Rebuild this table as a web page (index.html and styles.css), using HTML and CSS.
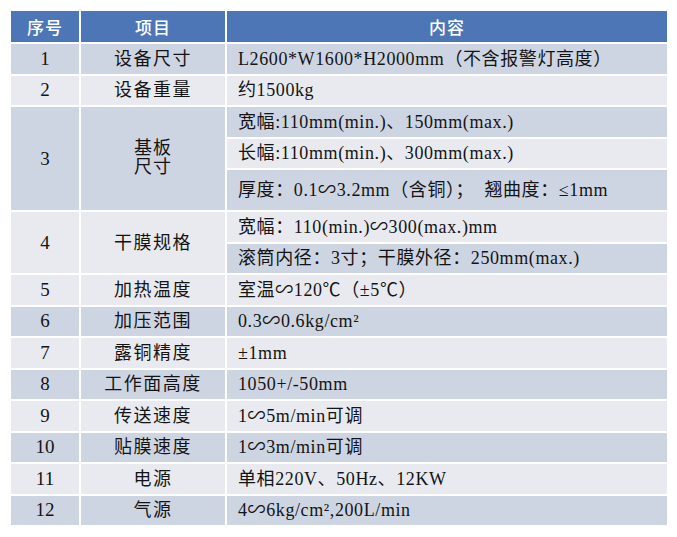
FILE: index.html
```html
<!DOCTYPE html>
<html lang="zh-CN">
<head>
<meta charset="utf-8">
<title>设备参数</title>
<link rel="stylesheet" href="styles.css">
</head>
<body>
<table class="spec">
  <colgroup>
    <col class="c-no">
    <col class="c-item">
    <col class="c-val">
  </colgroup>
  <thead>
    <tr class="head"><th>序号</th><th>项目</th><th>内容</th></tr>
  </thead>
  <tbody>
    <tr class="dark"><td class="no">1</td><td class="item">设备尺寸</td><td class="val">L2600*W1600*H2000mm（不含报警灯高度）</td></tr>
    <tr class="light"><td class="no">2</td><td class="item">设备重量</td><td class="val">约1500kg</td></tr>
    <tr class="dark"><td class="no" rowspan="3">3</td><td class="item two" rowspan="3">基板<br>尺寸</td><td class="val">宽幅:110mm(min.)、150mm(max.)</td></tr>
    <tr class="light"><td class="val">长幅:110mm(min.)、300mm(max.)</td></tr>
    <tr class="dark tall"><td class="val">厚度：0.1∽3.2mm（含铜）；&nbsp; 翘曲度：≤1mm</td></tr>
    <tr class="light"><td class="no" rowspan="2">4</td><td class="item" rowspan="2">干膜规格</td><td class="val">宽幅：110(min.)∽300(max.)mm</td></tr>
    <tr class="dark"><td class="val">滚筒内径：3寸；干膜外径：250mm(max.)</td></tr>
    <tr class="light"><td class="no">5</td><td class="item">加热温度</td><td class="val">室温∽120℃（±5℃）</td></tr>
    <tr class="dark"><td class="no">6</td><td class="item">加压范围</td><td class="val">0.3∽0.6kg/cm²</td></tr>
    <tr class="light"><td class="no">7</td><td class="item">露铜精度</td><td class="val">±1mm</td></tr>
    <tr class="dark"><td class="no">8</td><td class="item">工作面高度</td><td class="val">1050+/-50mm</td></tr>
    <tr class="light"><td class="no">9</td><td class="item">传送速度</td><td class="val">1∽5m/min可调</td></tr>
    <tr class="dark"><td class="no">10</td><td class="item">贴膜速度</td><td class="val">1∽3m/min可调</td></tr>
    <tr class="light"><td class="no">11</td><td class="item">电源</td><td class="val">单相220V、50Hz、12KW</td></tr>
    <tr class="dark"><td class="no">12</td><td class="item">气源</td><td class="val">4∽6kg/cm²,200L/min</td></tr>
  </tbody>
</table>
</body>
</html>
```
FILE: styles.css
```css
html, body {
  margin: 0;
  padding: 0;
  background: #ffffff;
}

.spec {
  margin: 9px 0 0 9px;
  border-collapse: separate;
  border-spacing: 2px;
  table-layout: fixed;
  width: 660px;
  font-family: "Liberation Serif", "Noto Sans CJK SC", serif;
  font-size: 18px;
  color: #141414;
}

.c-no { width: 68px; }
.c-item { width: 144px; }
.c-val { width: 440px; }

.spec th,
.spec td {
  padding: 0;
  vertical-align: middle;
  white-space: nowrap;
  line-height: 22px;
}

.head th {
  height: 31px;
  background: #4d76b6;
  color: #ffffff;
  font-family: "Noto Sans CJK SC", sans-serif;
  font-weight: 500;
  font-size: 17px;
  letter-spacing: 1px;
  text-align: center;
}

.spec tbody tr { height: 29.5px; }
.spec tbody tr.tall { height: 40px; }

.dark td { background: #ced5e2; }
.light td { background: #e8eaef; }

.no {
  text-align: center;
  font-size: 19px;
}

.item {
  text-align: center;
  letter-spacing: 1.5px;
}

.spec td.two {
  line-height: 19px;
  letter-spacing: 1px;
  padding-bottom: 2px;
}

.val {
  text-align: left;
  padding-left: 11px !important;
  letter-spacing: 0.6px;
}
```
